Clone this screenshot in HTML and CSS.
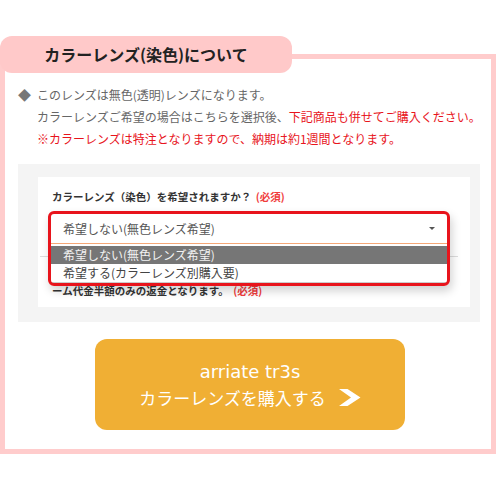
FILE: index.html
```html
<!DOCTYPE html>
<html lang="ja">
<head>
<meta charset="utf-8">
<link rel="stylesheet" href="styles.css">
</head>
<body>
<section class="frame">
  <h2 class="tab">カラーレンズ(染色)について</h2>
  <div class="notes">
    <p><span class="diamond">◆</span>このレンズは無色(透明)レンズになります。</p>
    <p>カラーレンズご希望の場合はこちらを選択後、<span class="red">下記商品も併せてご購入ください。</span></p>
    <p class="red">※カラーレンズは特注となりますので、納期は約1週間となります。</p>
  </div>
  <div class="greybox">
    <div class="whitebox">
      <div class="label">カラーレンズ（染色）を希望されますか？ <span class="req">(必須)</span></div>
      <div class="field">
        <div class="select">
          <span>希望しない(無色レンズ希望)</span>
          <span class="caret"></span>
        </div>
        <div class="listbox">
          <div class="opt sel">希望しない(無色レンズ希望)</div>
          <div class="opt">希望する(カラーレンズ別購入要)</div>
        </div>
        <div class="outline"></div>
      </div>
      <hr class="rule">
      <div class="label">ーム代金半額のみの返金となります。 <span class="req">(必須)</span></div>
    </div>
  </div>
  <a class="buy">
    <span class="buy-name">arriate tr3s</span>
    <span class="buy-line">カラーレンズを購入する
      <svg class="chev" width="23" height="17" viewBox="0 0 23 17"><path d="M1 0 H9.5 L22.5 8.5 L9.5 17 H1 L13 8.5 Z" fill="#fff"/></svg>
    </span>
  </a>
</section>
</body>
</html>
```
FILE: styles.css
```css
* { box-sizing: border-box; }
body {
  margin: 0;
  background: #fff;
  font-family: "Noto Sans CJK JP", "Noto Sans", sans-serif;
  color: #666;
}
.frame {
  margin: 54px 4px 0 0;
  width: 496px;
  height: 400px;
  border: 5px solid #ffcccc;
}
.tab {
  margin: -23px 0 0 -5px;
  width: 292px;
  height: 37px;
  background: #ffc9c9;
  border-radius: 12px;
  font-size: 16px;
  font-weight: bold;
  color: #222;
  line-height: 37px;
  text-align: center;
}
.notes {
  margin-top: 11px;
  padding-left: 32px;
  font-size: 12px;
  line-height: 22px;
}
.notes p { margin: 0; white-space: nowrap; }
.diamond {
  display: inline-block;
  width: 19px;
  margin-left: -19px;
  color: #777;
  font-size: 13px;
}
.red { color: #e8141c; }
.greybox {
  margin: 14px 0 0 13px;
  width: 462px;
  background: #f4f4f4;
  padding: 13px 10px 15px 20px;
}
.whitebox {
  background: #fff;
  height: 130px;
  padding: 12px 23px 0 13px;
}
.label {
  padding-left: 1px;
  font-size: 10.5px;
  font-weight: bold;
  color: #333;
  line-height: 16px;
  white-space: nowrap;
}
.req { color: #f03c3c; margin-left: 2px; }
.field {
  position: relative;
  margin-top: 9px;
}
.select {
  height: 30px;
  border-bottom: 1px solid #f5a878;
  padding: 0 12px;
  display: flex;
  align-items: center;
  justify-content: space-between;
  font-size: 12px;
  color: #555;
}
.caret {
  width: 0;
  height: 0;
  border-left: 3px solid transparent;
  border-right: 3px solid transparent;
  border-top: 3px solid #555;
}
.listbox {
  position: absolute;
  top: 30px;
  left: 0;
  right: 0;
  padding-top: 2px;
  background: #fff;
  border-bottom: 1px solid #ccc;
  z-index: 2;
}
.opt {
  height: 18px;
  line-height: 18px;
  padding-left: 12px;
  font-size: 12px;
  color: #444;
}
.opt.sel { background: #767676; color: #f2f2f2; }
.outline {
  position: absolute;
  top: -3px;
  left: -3px;
  right: -3px;
  height: 75px;
  border: 3px solid #e8141c;
  border-radius: 6px;
  box-shadow: 2px 5px 10px rgba(0, 0, 0, 0.18);
  z-index: 3;
}
.rule {
  margin: 12px -11px 26px -11px;
  border: 0;
  border-top: 1px solid #ddd;
}
.buy {
  margin: 17px 0 0 90px;
  width: 310px;
  height: 91px;
  border-radius: 12px;
  background: #f0af34;
  color: #fff;
  display: flex;
  flex-direction: column;
  align-items: center;
  justify-content: center;
}
.buy-name {
  font-family: "DejaVu Sans", sans-serif;
  font-size: 18px;
  line-height: 26px;
}
.buy-line {
  font-size: 17px;
  line-height: 26px;
  display: flex;
  align-items: center;
  gap: 12px;
}
.chev { display: block; }
```
